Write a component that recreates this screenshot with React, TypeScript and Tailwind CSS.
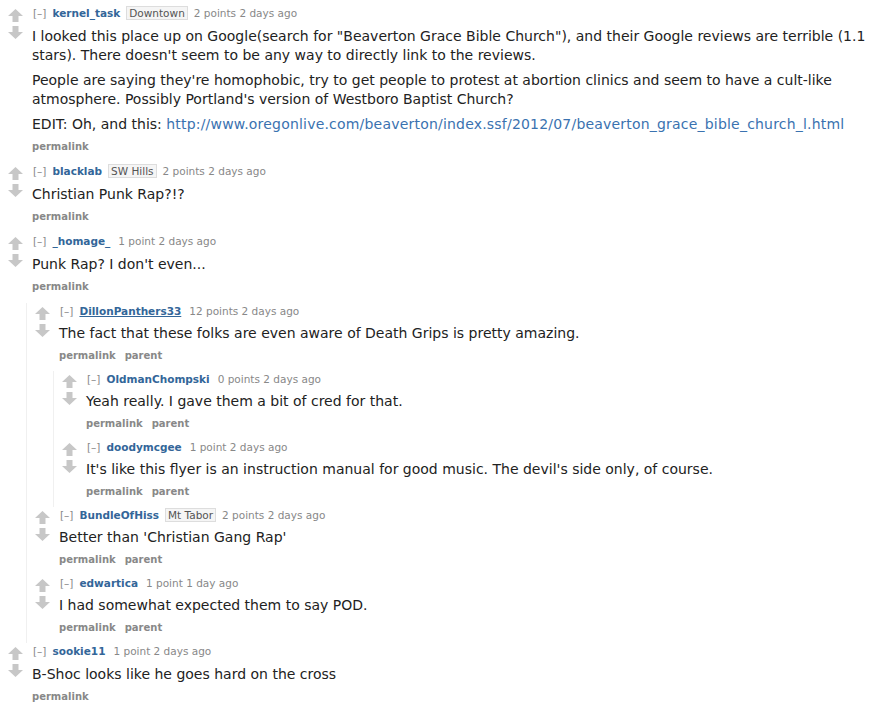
import React from 'react';

type Comment = {
  author: string;
  flair?: string;
  score: string;
  age: string;
  body: React.ReactNode[];
  parent?: boolean;
  underline?: boolean;
  children?: Comment[];
};

const link = 'http://www.oregonlive.com/beaverton/index.ssf/2012/07/beaverton_grace_bible_church_l.html';

const comments: Comment[] = [
  {
    author: 'kernel_task',
    flair: 'Downtown',
    score: '2 points',
    age: '2 days ago',
    body: [
      'I looked this place up on Google(search for "Beaverton Grace Bible Church"), and their Google reviews are terrible (1.1 stars). There doesn\'t seem to be any way to directly link to the reviews.',
      "People are saying they're homophobic, try to get people to protest at abortion clinics and seem to have a cult-like atmosphere. Possibly Portland's version of Westboro Baptist Church?",
      <>
        EDIT: Oh, and this:{' '}
        <a href="#" className="tracking-[0.2px] text-[#3a72b0]">
          {link}
        </a>
      </>,
    ],
  },
  { author: 'blacklab', flair: 'SW Hills', score: '2 points', age: '2 days ago', body: ['Christian Punk Rap?!?'] },
  {
    author: '_homage_',
    score: '1 point',
    age: '2 days ago',
    body: ["Punk Rap? I don't even..."],
    children: [
      {
        author: 'DillonPanthers33',
        score: '12 points',
        age: '2 days ago',
        underline: true,
        parent: true,
        body: ['The fact that these folks are even aware of Death Grips is pretty amazing.'],
        children: [
          { author: 'OldmanChompski', score: '0 points', age: '2 days ago', parent: true, body: ['Yeah really. I gave them a bit of cred for that.'] },
          {
            author: 'doodymcgee',
            score: '1 point',
            age: '2 days ago',
            parent: true,
            body: ["It's like this flyer is an instruction manual for good music. The devil's side only, of course."],
          },
        ],
      },
      { author: 'BundleOfHiss', flair: 'Mt Tabor', score: '2 points', age: '2 days ago', parent: true, body: ["Better than 'Christian Gang Rap'"] },
      { author: 'edwartica', score: '1 point', age: '1 day ago', parent: true, body: ['I had somewhat expected them to say POD.'] },
    ],
  },
  { author: 'sookie11', score: '1 point', age: '2 days ago', body: ['B-Shoc looks like he goes hard on the cross'] },
];

const Arrow = ({ down }: { down?: boolean }) => (
  <svg width="15" height="13" viewBox="0 0 15 13" className={down ? 'rotate-180' : ''}>
    <polygon points="7.5,0 15,7 10.5,7 10.5,13 4.5,13 4.5,7 0,7" fill="#c7c7c7" />
  </svg>
);

const CommentItem = ({ c, depth = 0 }: { c: Comment; depth?: number }) => (
  <div>
    <div className="flex">
      <div className="ml-2 mr-[9px] flex w-[15px] shrink-0 flex-col gap-[4px] pt-[4px]">
        <Arrow />
        <Arrow down />
      </div>
      <div className={`min-w-0 flex-1 ${depth === 0 ? 'pb-[8px]' : 'pb-[7px]'}`}>
        <p className="text-[10.5px] leading-4 text-[#888]">
          <span className="mr-[6px] ml-px">[–]</span>
          <a href="#" className={`mr-[6px] font-bold text-[#336699] ${c.underline ? 'underline' : ''}`}>
            {c.author}
          </a>
          {c.flair && (
            <span className="mr-[6px] border border-[#ddd] bg-[#f5f5f5] px-[2px] text-[#545454]">{c.flair}</span>
          )}
          <span className={c.flair ? '' : 'ml-[2px]'}>
            {c.score} {c.age}
          </span>
        </p>
        <div
          className={`space-y-[6px] pr-2 text-[14px] leading-[19px] text-[#222] ${depth === 0 ? 'mt-[6px]' : 'mt-[5px]'}`}
        >
          {c.body.map((p, i) => (
            <p key={i}>{p}</p>
          ))}
        </div>
        <p className="mt-[5px] text-[10px] font-bold leading-4 text-[#888]">
          <a href="#">permalink</a>
          {c.parent && <a href="#" className="ml-[9px]">parent</a>}
        </p>
      </div>
    </div>
    {c.children && (
      <div className="ml-[26px] border-l border-[#f0f0f0]">
        {c.children.map((ch) => (
          <CommentItem key={ch.author} c={ch} depth={depth + 1} />
        ))}
      </div>
    )}
  </div>
);

export default function App() {
  return (
    <div className="min-h-screen bg-white pt-[5px] font-['DejaVu_Sans',Verdana,sans-serif]">
      {comments.map((c) => (
        <CommentItem key={c.author} c={c} />
      ))}
    </div>
  );
}
